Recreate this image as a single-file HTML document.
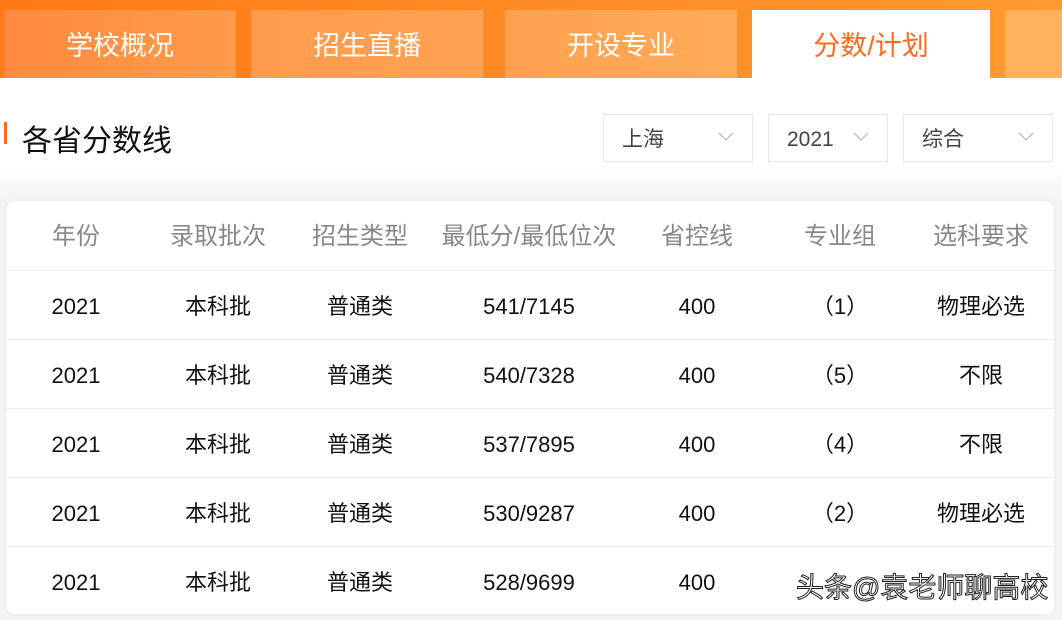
<!DOCTYPE html>
<html><head><meta charset="utf-8"><style>
*{margin:0;padding:0;box-sizing:border-box}
body{width:1062px;height:620px;overflow:hidden;font-family:"Liberation Sans","Noto Sans CJK SC",sans-serif;background:linear-gradient(#fff 0,#fff 170px,#f3f3f3 200px,#f3f3f3 100%);position:relative}
.top{position:absolute;left:0;top:0;width:1062px;height:78px;background:linear-gradient(90deg,#ff7a16,#ff9a30)}
.tab{position:absolute;top:10px;height:68px;color:#fff;font-size:27px;text-align:center;line-height:72px}
.sel{background:#fff;color:#ff6a1a}
.title{position:absolute;left:22px;top:116px;font-size:30px;color:#111}
.bar{position:absolute;left:4px;top:122px;width:3px;height:22px;background:#ff6a1a}
.dd{position:absolute;top:114px;height:48px;border:1px solid #e6e6e6;background:#fff;font-size:21px;color:#444;line-height:50px;padding-left:18px}
.dd svg{position:absolute;right:18px;top:17px}
.card{position:absolute;left:6px;top:201px;width:1048px;height:413px;background:#fff;border-radius:9px;box-shadow:0 0 4px rgba(0,0,0,.05)}
.row{position:absolute;left:0;width:1048px;height:69px;border-top:1px solid #ececec}
.row span{position:absolute;top:0;line-height:72px;transform:translateX(-50%);white-space:nowrap;font-size:22px;color:#111}
.hd span{color:#888;font-size:24px}
.wm{position:absolute;left:796px;top:566px;font-size:28px;color:#fff;-webkit-text-stroke:1px #222}
</style></head><body>
<div class="top"></div>
<div class="tab" style="left:4px;width:232px;background:linear-gradient(90deg,#ff8a3e,#ff9b4a)">学校概况</div>
<div class="tab" style="left:251px;width:232px;background:linear-gradient(90deg,#ff9b4c,#ffa152)">招生直播</div>
<div class="tab" style="left:505px;width:232px;background:linear-gradient(90deg,#ffa150,#ffab58)">开设专业</div>
<div class="tab sel" style="left:752px;width:238px">分数/计划</div>
<div class="tab" style="left:1005px;width:57px;background:#ffb05c"></div>
<div class="bar"></div><div class="title">各省分数线</div>
<div class="dd" style="left:603px;width:150px">上海<svg width="16" height="10"><path d="M1 1L8 8L15 1" fill="none" stroke="#bbb" stroke-width="1.3"/></svg></div>
<div class="dd" style="left:768px;width:120px">2021<svg width="16" height="10"><path d="M1 1L8 8L15 1" fill="none" stroke="#bbb" stroke-width="1.3"/></svg></div>
<div class="dd" style="left:903px;width:150px">综合<svg width="16" height="10"><path d="M1 1L8 8L15 1" fill="none" stroke="#bbb" stroke-width="1.3"/></svg></div>
<div class="card">
<div class="row hd" style="top:0;border-top:none"><span style="left:70px">年份</span><span style="left:212px">录取批次</span><span style="left:354px">招生类型</span><span style="left:523px">最低分/最低位次</span><span style="left:691px">省控线</span><span style="left:834px">专业组</span><span style="left:975px">选科要求</span></div>
<div class="row" style="top:69px"><span style="left:70px">2021</span><span style="left:212px">本科批</span><span style="left:354px">普通类</span><span style="left:523px">541/7145</span><span style="left:691px">400</span><span style="left:834px">（1）</span><span style="left:975px">物理必选</span></div>
<div class="row" style="top:138px"><span style="left:70px">2021</span><span style="left:212px">本科批</span><span style="left:354px">普通类</span><span style="left:523px">540/7328</span><span style="left:691px">400</span><span style="left:834px">（5）</span><span style="left:975px">不限</span></div>
<div class="row" style="top:207px"><span style="left:70px">2021</span><span style="left:212px">本科批</span><span style="left:354px">普通类</span><span style="left:523px">537/7895</span><span style="left:691px">400</span><span style="left:834px">（4）</span><span style="left:975px">不限</span></div>
<div class="row" style="top:276px"><span style="left:70px">2021</span><span style="left:212px">本科批</span><span style="left:354px">普通类</span><span style="left:523px">530/9287</span><span style="left:691px">400</span><span style="left:834px">（2）</span><span style="left:975px">物理必选</span></div>
<div class="row" style="top:345px"><span style="left:70px">2021</span><span style="left:212px">本科批</span><span style="left:354px">普通类</span><span style="left:523px">528/9699</span><span style="left:691px">400</span></div>
</div>
<div class="wm">头条@袁老师聊高校</div>
</body></html>
